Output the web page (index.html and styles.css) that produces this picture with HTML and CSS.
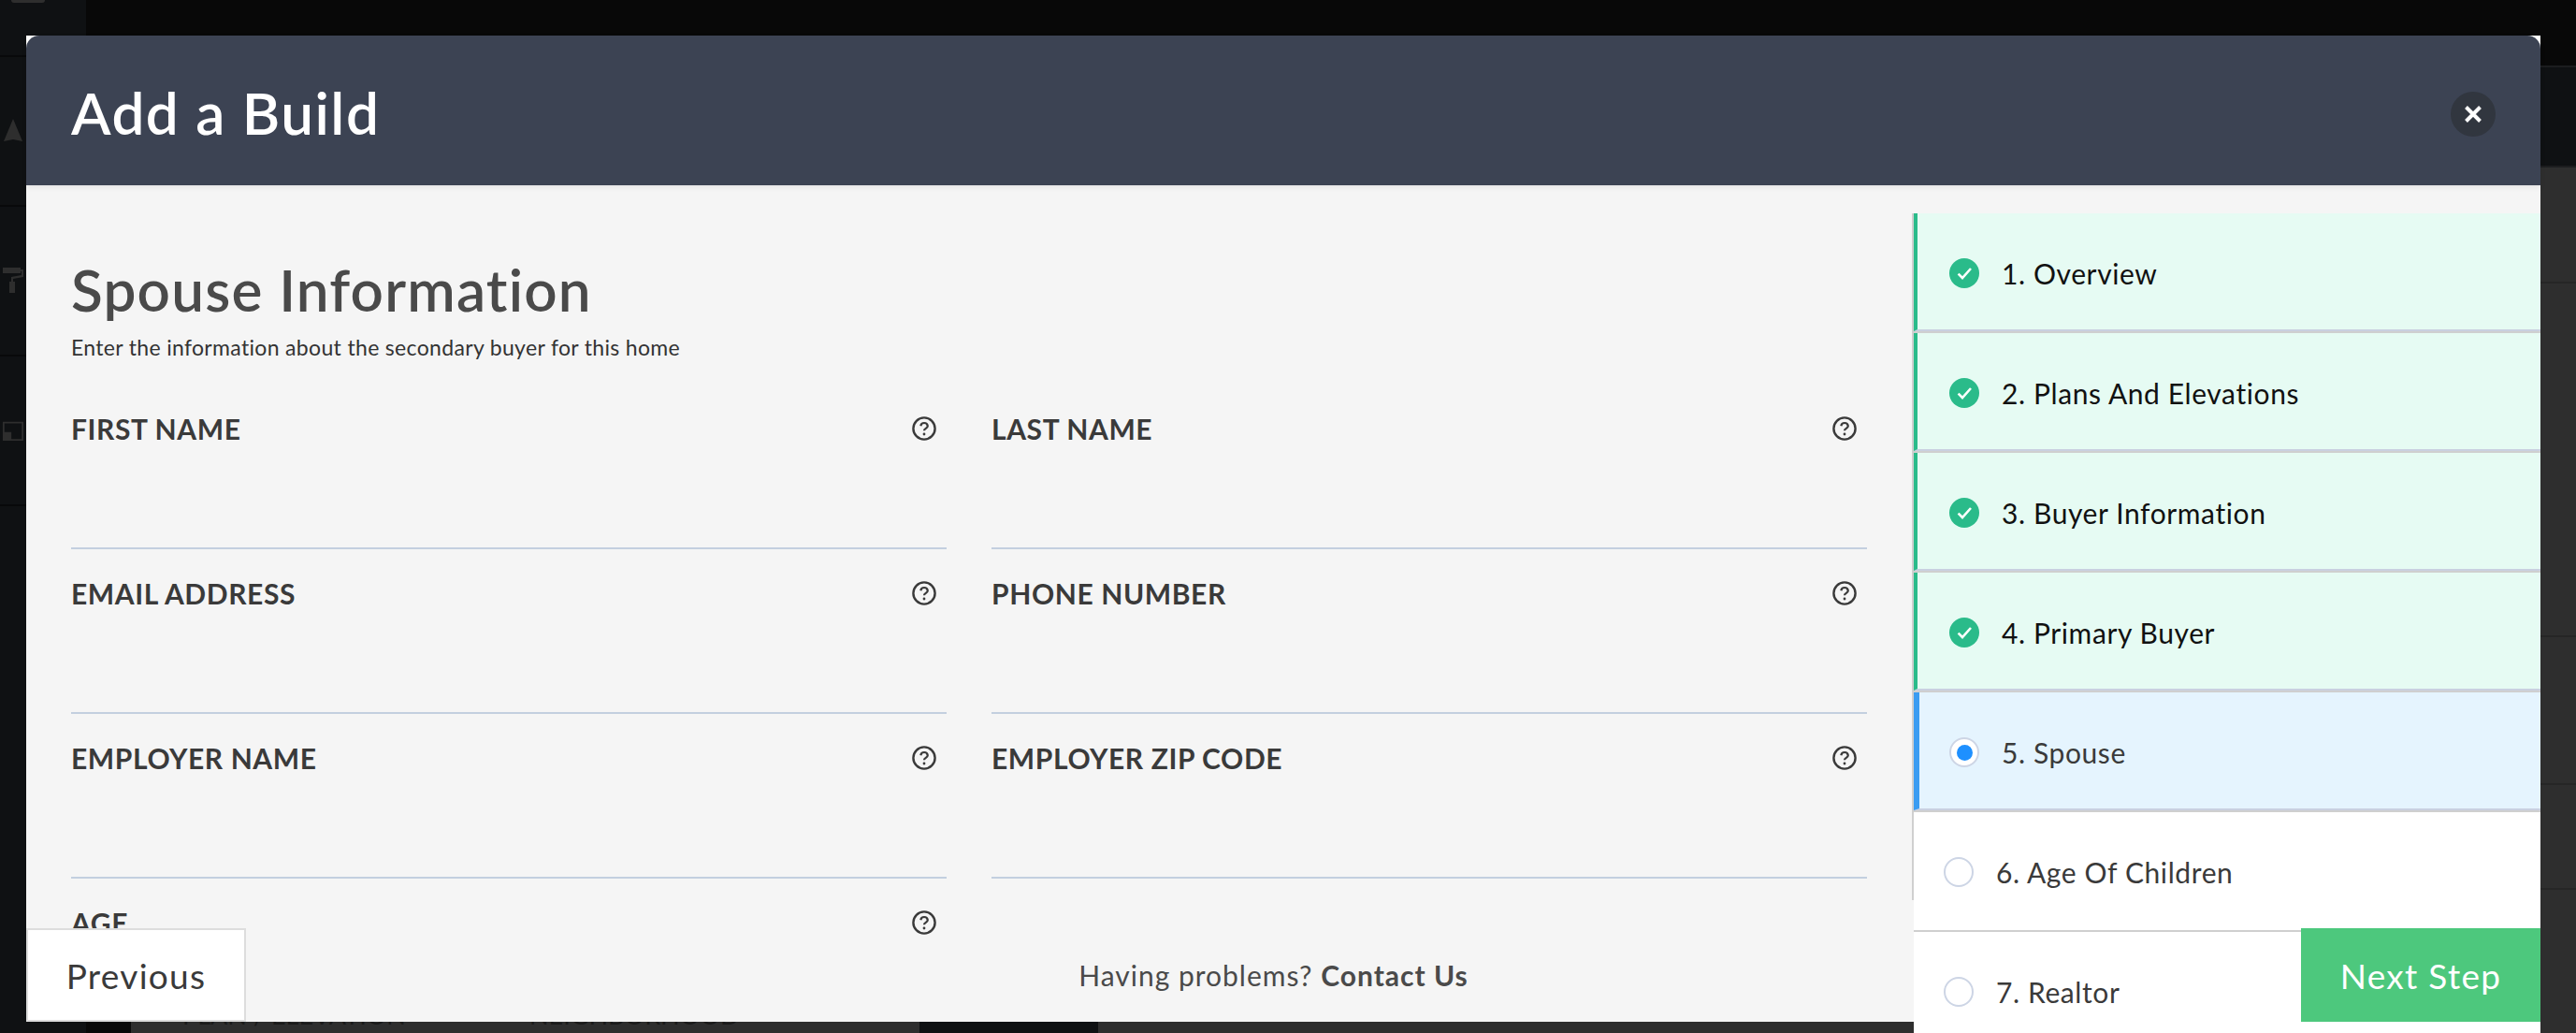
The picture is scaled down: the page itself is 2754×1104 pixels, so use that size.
FILE: index.html
```html
<!DOCTYPE html>
<html lang="en">
<head>
    <meta charset="UTF-8">
    <title>Add a Build</title>
    <link rel="stylesheet" href="styles.css">
</head>
<body>
    <svg class="sprite" width="0" height="0">
        <symbol id="help" viewBox="0 0 26 26">
            <circle cx="13" cy="13" r="11.6" fill="none" stroke="currentColor" stroke-width="2.4"/>
            <path d="M9.3 10.2a3.8 3.8 0 0 1 7.5 0c0 2.5-3.8 2.7-3.8 5" fill="none" stroke="currentColor" stroke-width="2.2"/>
            <circle cx="13" cy="19" r="1.4" fill="currentColor"/>
        </symbol>
        <symbol id="check" viewBox="0 0 32 32">
            <circle cx="16" cy="16" r="16" fill="#2abb8a"/>
            <path d="M9.6 16.6l4.4 4.4 9-10" fill="none" stroke="#fff" stroke-width="2.6"/>
        </symbol>
    </svg>

    <!-- app behind the modal -->
    <div class="app">
        <aside class="rail">
            <div class="rail-row rail-top"><span class="rail-arc"></span></div>
            <div class="rail-row">
                <svg class="rail-icon" viewBox="0 0 24 30"><path d="M12 2l10 24-10-2-10 2z" fill="#2e2e2e"/></svg>
            </div>
            <div class="rail-row">
                <svg class="rail-icon" viewBox="0 0 24 30"><path d="M1 1h19v6H1zM20 3h3v8l-11 2v3h2v12H8V16h2v-5l11-2V5h-1z" fill="#2e2e2e"/></svg>
            </div>
            <div class="rail-row">
                <svg class="rail-icon" viewBox="0 0 26 26"><path d="M1 3h24v22H1zM3 5v10h8v8h12V5z" fill="#2e2e2e"/></svg>
            </div>
        </aside>
        <main class="main">
            <div class="topbar"></div>
            <div class="subbar"></div>
            <div class="content">
                <div class="panel panel-table">
                    <span class="col-head col-plan">PLAN / ELEVATION</span>
                    <span class="col-head">NEIGHBORHOOD</span>
                </div>
                <div class="panel panel-side">
                    <div class="side-row side-a"></div>
                    <div class="side-row side-b"></div>
                    <div class="side-row side-c"></div>
                    <div class="side-row side-d"></div>
                </div>
            </div>
        </main>
    </div>

    <section class="modal">
        <header class="modal-head">
            <h1>Add a Build</h1>
            <button class="close-btn" aria-label="Close">
                <svg viewBox="0 0 20 20" width="20" height="20"><path d="M2.5 2.5l15 15M17.5 2.5l-15 15" stroke="#fff" stroke-width="4"/></svg>
            </button>
        </header>
        <div class="modal-body">
            <div class="form-col">
                <h2>Spouse Information</h2>
                <p class="form-sub">Enter the information about the secondary buyer for this home</p>
                <div class="fields">
                    <div class="field"><label>FIRST NAME</label><svg class="help"><use href="#help"/></svg></div>
                    <div class="field"><label>LAST NAME</label><svg class="help"><use href="#help"/></svg></div>
                    <div class="field"><label>EMAIL ADDRESS</label><svg class="help"><use href="#help"/></svg></div>
                    <div class="field"><label>PHONE NUMBER</label><svg class="help"><use href="#help"/></svg></div>
                    <div class="field"><label>EMPLOYER NAME</label><svg class="help"><use href="#help"/></svg></div>
                    <div class="field"><label>EMPLOYER ZIP CODE</label><svg class="help"><use href="#help"/></svg></div>
                    <div class="field"><label>AGE</label><svg class="help"><use href="#help"/></svg></div>
                </div>
            </div>
            <ol class="steps">
                <li class="step done"><div class="step-in"><svg class="step-icon"><use href="#check"/></svg>1. Overview</div></li>
                <li class="step done"><div class="step-in"><svg class="step-icon"><use href="#check"/></svg>2. Plans And Elevations</div></li>
                <li class="step done"><div class="step-in"><svg class="step-icon"><use href="#check"/></svg>3. Buyer Information</div></li>
                <li class="step done"><div class="step-in"><svg class="step-icon"><use href="#check"/></svg>4. Primary Buyer</div></li>
                <li class="step current"><div class="step-in"><span class="radio"></span>5. Spouse</div></li>
                <li class="step"><div class="step-in"><span class="radio"></span>6. Age Of Children</div></li>
                <li class="step"><div class="step-in"><span class="radio"></span>7. Realtor</div></li>
            </ol>
        </div>
        <footer class="modal-foot">
            <button class="prev-btn">Previous</button>
            <p class="help-text">Having problems? <b>Contact Us</b></p>
            <button class="next-btn">Next Step</button>
        </footer>
    </section>
</body>
</html>
```

FILE: styles.css
```css
html, body { margin: 0; height: 1104px; overflow: hidden; background: #080808; }
body { font-family: Lato, "Open Sans", sans-serif; position: relative; }
.sprite { position: absolute; }

/* background app */
.app { display: flex; height: 1104px; }
.rail { width: 92px; background: #0f1113; flex: none; }
.rail-row { height: 158px; border-bottom: 2px solid #08090a; display: flex; align-items: center; padding-left: 2px; }
.rail-top { height: 59px; align-items: flex-start; }
.rail-arc { width: 36px; height: 3px; margin-left: 10px; background: #2e2e2e; border-radius: 0 0 18px 18px; }
.rail-icon { width: 24px; height: 30px; }
.main { flex: 1; display: flex; flex-direction: column; }
.topbar { height: 78px; background: #080808; }
.subbar { height: 116px; background: #0f1113; border-top: 2px solid #1c1d1f; border-bottom: 2px solid #1c1d1f; }
.content { flex: 1; display: flex; margin-left: 48px; background: #0f1113; }
.panel { background: #2e2e2e; }
.panel-table { width: 843px; padding: 887px 0 0 55px; box-sizing: border-box; display: flex; }
.col-head { font-size: 27px; line-height: 38px; color: #1b1b1b; white-space: nowrap; }
.col-plan { width: 371px; }
.panel-side { flex: 1; margin-left: 191px; }
.side-row { border-bottom: 2px solid #262626; }
.side-a { height: 122px; }
.side-b { height: 376px; }
.side-c { height: 156px; }
.side-d { height: 110px; }

/* modal */
.modal { position: absolute; left: 28px; top: 38px; width: 2688px; height: 1054px; background: #fff; display: flex; flex-direction: column; }
.modal-head { height: 160px; flex: none; background: #3c4353; border-radius: 14px 14px 0 0; display: flex; align-items: center; justify-content: space-between; padding: 0 48px; box-shadow: 0 2px 6px rgba(0,0,0,.08); position: relative; z-index: 1; }
.modal-head h1 { margin: 3px 0 0; color: #fff; font-size: 62px; font-weight: 600; letter-spacing: 1.5px; }
.close-btn { width: 48px; height: 48px; margin-top: 8px; border-radius: 50%; border: none; background: #31363f; padding: 0; display: flex; align-items: center; justify-content: center; }
.modal-body { flex: 1; display: flex; background: #f5f5f5; min-height: 0; }

.form-col { width: 2016px; height: 894px; flex: none; box-sizing: border-box; padding: 75px 48px 0; overflow: hidden; }
.form-col h2 { margin: 0; font-size: 62px; line-height: 72px; font-weight: 600; letter-spacing: 1.2px; color: #4a4a4a; }
.form-sub { margin: 12px 0 0; font-size: 23px; line-height: 28px; letter-spacing: .33px; color: #333; }
.fields { display: grid; grid-template-columns: 936px 936px; column-gap: 48px; margin-top: 26px; }
.field { height: 176px; box-sizing: border-box; border-bottom: 2px solid #c3cfdf; display: flex; justify-content: space-between; align-items: flex-start; padding: 29px 11px 0 0; }
.field label { font-size: 30px; line-height: 36px; font-weight: 700; letter-spacing: .6px; color: #3a3a3a; }
.help { width: 26px; height: 26px; color: #3a3a3a; margin-top: 5px; }

/* steps */
.steps { list-style: none; margin: 30px 0 0; padding: 0; width: 670px; height: 876px; position: relative; margin-left: 2px; background: #fff; }
.steps::before { content: ""; position: absolute; left: -2px; top: 0; width: 2px; height: 734px; background: #cfcfcf; }
.step { border-bottom: 2px solid #cfcfcf; }
.step:last-child { border-bottom: none; }
.step-in { height: 126px; box-sizing: border-box; padding: 4px 0 0 32px; border-bottom: 2px solid transparent; display: flex; align-items: center; font-size: 30px; letter-spacing: .6px; color: #3a3a3a; }
.step-icon { width: 32px; height: 32px; margin-right: 24px; flex: none; }
.radio { width: 32px; height: 32px; box-sizing: border-box; margin-right: 24px; flex: none; border: 2px solid #cdd5e5; border-radius: 50%; background: #fff; display: flex; align-items: center; justify-content: center; }
.done .step-in { background: #e6fbf3; border-left: 4px solid #2abb8a; border-bottom-color: #c9d0e0; padding-left: 34px; color: #111; }
.current .step-in { background: #e5f4fe; border-left: 6px solid #3a9cf2; border-bottom-color: #c9d0e0; }
.current .radio::after { content: ""; width: 17px; height: 17px; border-radius: 50%; background: #1e90ff; }

/* footer lies over the form and the steps */
.modal-foot { position: absolute; left: 0; right: 0; bottom: 0; height: 100px; display: flex; align-items: stretch; z-index: 2; }
.prev-btn, .next-btn { font-family: inherit; font-size: 37px; letter-spacing: 1.3px; padding: 0; }
.prev-btn { width: 235px; background: #fff; border: 2px solid #ddd; color: #3a3a3a; }
.next-btn { width: 256px; background: #4dc87d; border: none; color: #fff; }
.help-text { flex: 1; margin: 0; text-align: center; font-size: 30px; line-height: 100px; letter-spacing: 1px; color: #4a4a4a; }
```
